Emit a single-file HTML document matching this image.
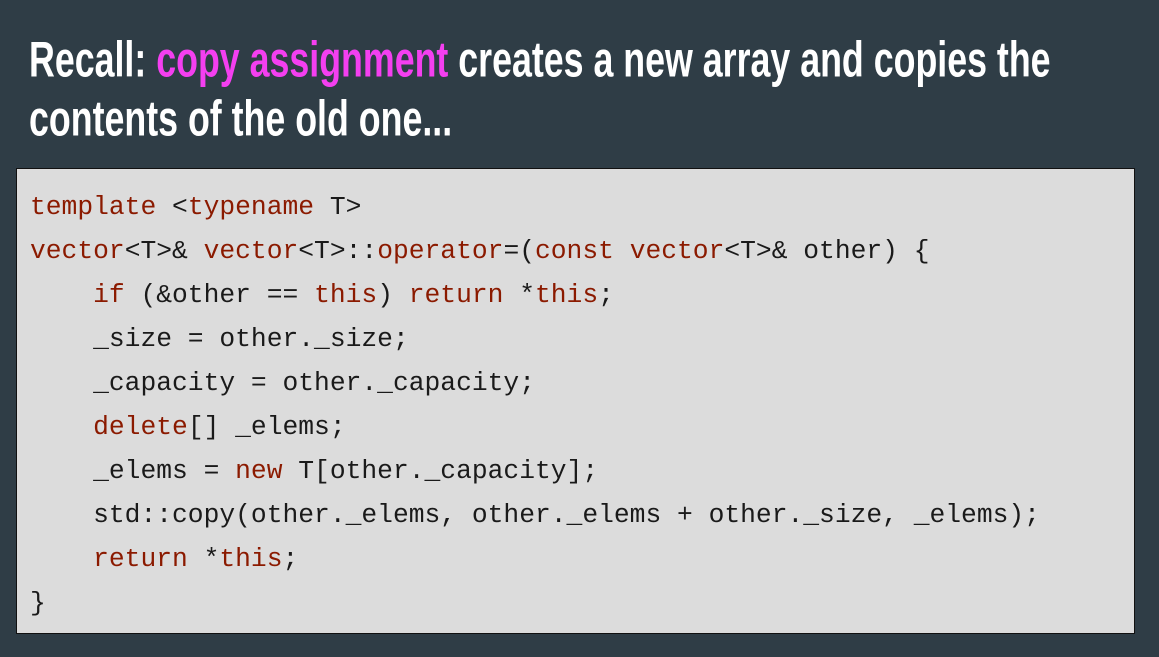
<!DOCTYPE html>
<html><head><style>
html,body{margin:0;padding:0;}
body{width:1159px;height:657px;background:#2f3d46;position:relative;overflow:hidden;}
.t{position:absolute;left:29px;color:#fff;font-family:"Liberation Sans",sans-serif;font-weight:bold;font-size:48px;white-space:nowrap;transform-origin:0 0;transform:scale(0.745,1.04);}
.p{color:#f43ff0;}
.box{position:absolute;left:16px;top:168px;width:1117px;height:464px;background:#dcdcdc;border:1px solid #111;}
pre{position:absolute;left:13px;top:16px;margin:0;font-family:"Liberation Mono",monospace;font-size:26.3px;line-height:44px;color:#1a1a1a;}
.k{color:#8b1a00;}
</style></head><body>
<div class="t" style="top:32px">Recall: <span class="p">copy assignment</span> creates a new array and copies the</div>
<div class="t" style="top:91px">contents of the old one...</div>
<div class="box"><pre><span class="k">template</span> &lt;<span class="k">typename</span> T&gt;
<span class="k">vector</span>&lt;T&gt;&amp; <span class="k">vector</span>&lt;T&gt;::<span class="k">operator</span>=(<span class="k">const</span> <span class="k">vector</span>&lt;T&gt;&amp; other) {
    <span class="k">if</span> (&amp;other == <span class="k">this</span>) <span class="k">return</span> *<span class="k">this</span>;
    _size = other._size;
    _capacity = other._capacity;
    <span class="k">delete</span>[] _elems;
    _elems = <span class="k">new</span> T[other._capacity];
    std::copy(other._elems, other._elems + other._size, _elems);
    <span class="k">return</span> *<span class="k">this</span>;
}</pre></div>
</body></html>
